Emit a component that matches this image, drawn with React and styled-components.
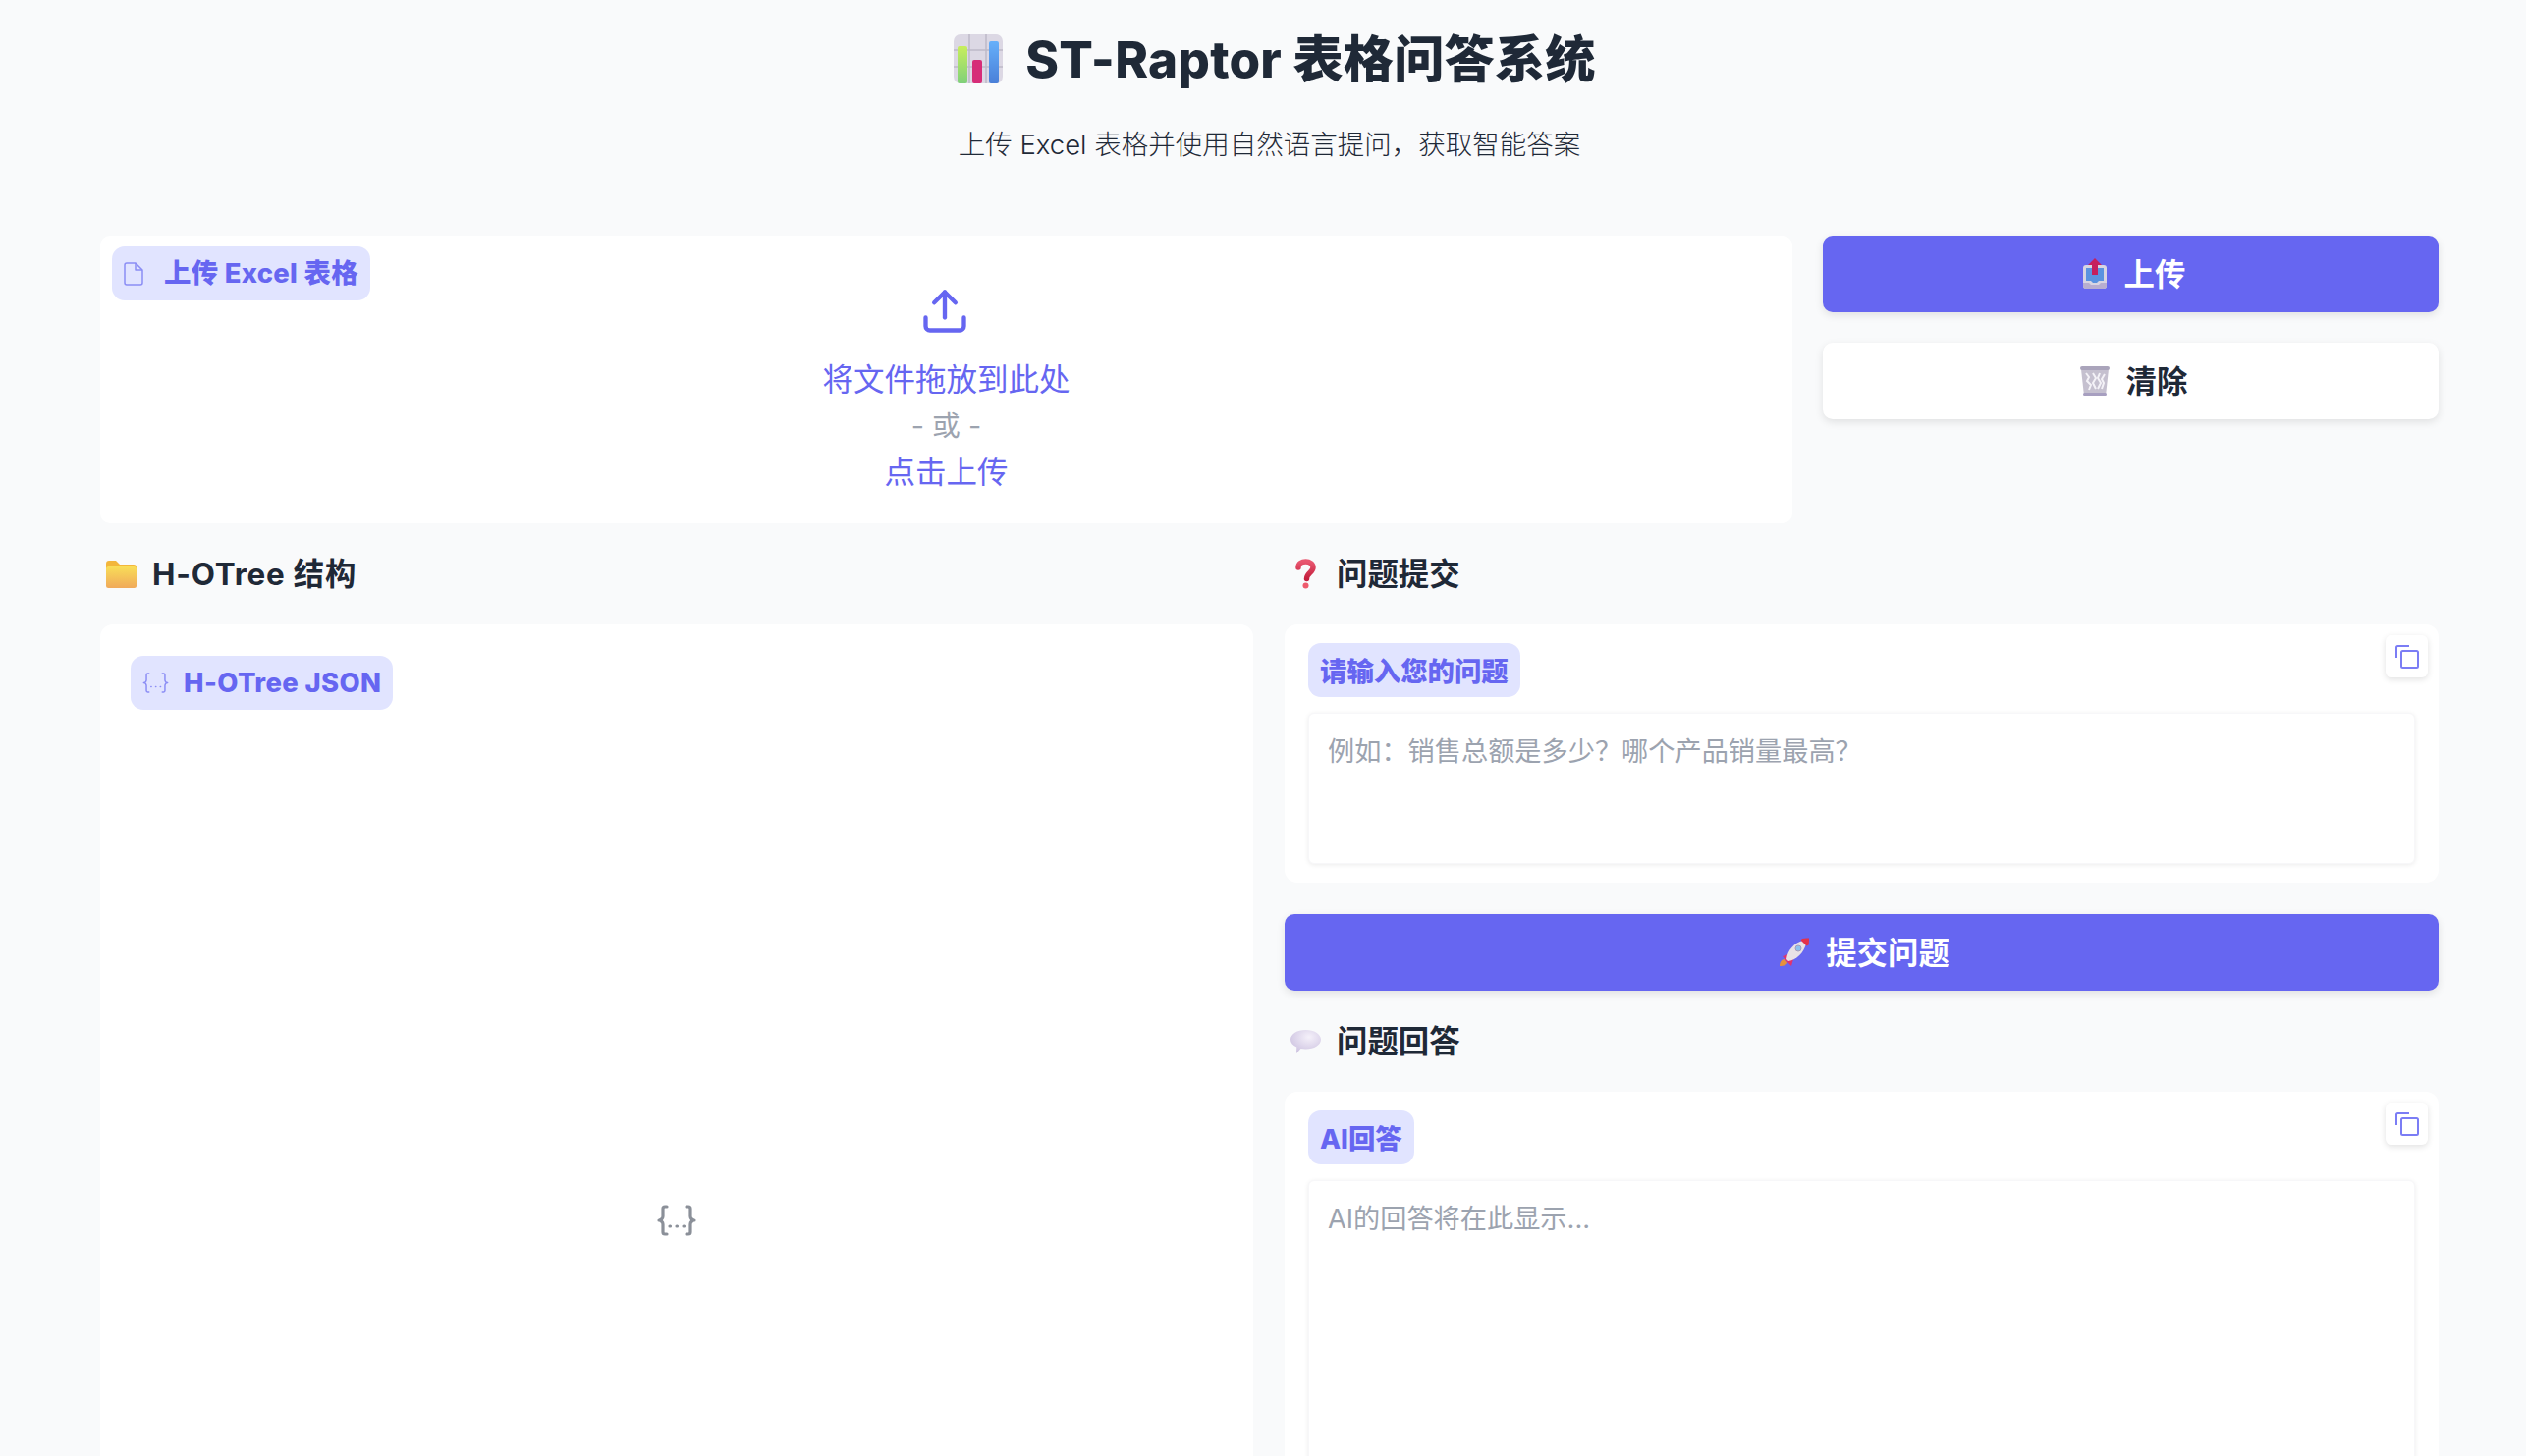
import React from 'react'
import styled, { createGlobalStyle } from 'styled-components'

const stack = `Inter, "Noto Sans CJK SC", sans-serif`
const primary = '#6666f1'

const Global = createGlobalStyle`
  html, body {
    margin: 0;
    padding: 0;
    height: 100%;
    overflow: hidden;
    background: #f9fafb;
  }
  * { box-sizing: border-box; }
  body { font-family: ${stack}; color: #1f2937; }
`

const Page = styled.div`
  height: 1483px;
  overflow: hidden;
  padding: 0 89px 0 102px;
`
const Header = styled.header`
  height: 240px;
  padding-top: 28px;
  text-align: center;
`
const Title = styled.h1`
  margin: 0;
  height: 64px;
  padding-left: 10px;
  display: flex;
  align-items: center;
  justify-content: center;
  gap: 22px;
  font-size: 51.2px;
  font-weight: 800;
  letter-spacing: 0.2px;
  line-height: 64px;
  color: #1f2937;
`
const Subtitle = styled.p`
  margin: 35px 0 0;
  font-size: 27.5px;
  line-height: 40px;
  font-weight: 300;
  color: #1f2937;
`
const TopRow = styled.section`
  display: grid;
  grid-template-columns: 1723px 1fr;
  gap: 31px;
`
const UploadPanel = styled.div`
  position: relative;
  height: 293px;
  background: #fff;
  border-radius: 10px;
  display: flex;
  flex-direction: column;
  align-items: center;
  padding-top: 51px;
  color: ${primary};
  font-size: 31.5px;
  line-height: 47px;
`
const UploadIcon = styled.svg`
  width: 52px;
  height: 52px;
  margin: 0 4px 20px 0;
  stroke: ${primary};
  stroke-width: 2;
  fill: none;
  stroke-linecap: round;
  stroke-linejoin: round;
`
const Or = styled.div`
  color: #9ca3af;
  font-size: 28.8px;
`
const Badge = styled.div`
  display: inline-flex;
  align-items: center;
  gap: ${p => p.$gap || 0}px;
  height: 55px;
  padding: 0 12px 1px;
  border-radius: 13px;
  background: #e1e4ff;
  color: ${primary};
  font-size: 27.4px;
  font-weight: 800;
  letter-spacing: ${p => p.$spacing || 0}px;
  white-space: nowrap;
  svg { margin-top: 1px; }
`
const FloatBadge = styled(Badge)`
  position: absolute;
  top: 11px;
  left: 12px;
`
const Actions = styled.div`
  display: flex;
  flex-direction: column;
  gap: 31px;
`
const Button = styled.button`
  display: flex;
  align-items: center;
  justify-content: center;
  gap: 16px;
  width: 100%;
  height: 78px;
  padding: 0 0 3px 5px;
  border: 0;
  border-radius: 10px;
  font-family: inherit;
  font-size: 31.4px;
  font-weight: 700;
  color: ${p => (p.$primary ? '#fff' : '#1f2937')};
  background: ${p => (p.$primary ? primary : '#fff')};
  box-shadow: 0 3px 8px rgba(0, 0, 0, 0.1);
  svg { margin-top: 3px; }
`
const Columns = styled.section`
  display: grid;
  grid-template-columns: 1174px 1fr;
  gap: 32px;
  margin-top: 18px;
`
const Column = styled.div`
  display: flex;
  flex-direction: column;
`
const SectionTitle = styled.h2`
  margin: 0;
  height: 66px;
  padding: 0 0 3px 5px;
  display: flex;
  align-items: center;
  gap: 16px;
  font-size: 31.4px;
  font-weight: 700;
  letter-spacing: ${p => p.$spacing || 0}px;
  color: #1f2937;
`
const IconBox = styled.span`
  width: 31px;
  height: 36px;
  margin: 4px 0 0 1px;
  display: flex;
  align-items: center;
  justify-content: center;
  flex: none;
`
const Card = styled.div`
  position: relative;
  background: #fff;
  border-radius: 13px;
  margin-top: 19px;
  padding: ${p => p.$pad || '19px 24px 18px'};
  display: flex;
  flex-direction: column;
  align-items: flex-start;
`
const TreeCard = styled(Card)`
  height: 1200px;
`
const TreeEmpty = styled.div`
  height: 1040px;
  width: 100%;
  display: flex;
  align-items: center;
  justify-content: center;
`
const Input = styled.textarea`
  display: block;
  width: 100%;
  height: ${p => p.$h}px;
  margin-top: 16px;
  padding: 19px 19px;
  border: 1px solid #f7f7f9;
  border-radius: 6px;
  background: #fff;
  box-shadow: 0 1px 5px rgba(0, 0, 0, 0.08);
  resize: none;
  outline: none;
  font-family: inherit;
  font-size: 27.2px;
  line-height: 40px;
  &::placeholder { color: #9ca3af; opacity: 1; }
`
const CopyButton = styled.div`
  position: absolute;
  top: 11px;
  right: 11px;
  width: 43px;
  height: 43px;
  border-radius: 6px;
  background: #fff;
  box-shadow: 0 2px 6px rgba(0, 0, 0, 0.12);
  display: flex;
  align-items: center;
  justify-content: center;
`
const SubmitWrap = styled.div`
  margin-top: 32px;
`
const AnswerTitle = styled(SectionTitle)`
  margin-top: 18px;
`

const ChartEmoji = () => (
  <svg width="52" height="50" viewBox="0 0 52 50">
    <defs>
      <linearGradient id="gGreen" x1="0" y1="0" x2="0" y2="1"><stop offset="0" stopColor="#c8ee5c" /><stop offset="1" stopColor="#7fd07a" /></linearGradient>
      <linearGradient id="gBlue" x1="0" y1="0" x2="0" y2="1"><stop offset="0" stopColor="#66b0fa" /><stop offset="1" stopColor="#4a7fd8" /></linearGradient>
    </defs>
    <rect x="1" y="0" width="50" height="50" rx="7" fill="#dcd8e4" />
    <path d="M17 0v50M34 0v50M1 16h50M1 33h50" stroke="#bdb9c8" strokeWidth="1.5" />
    <rect x="5" y="12" width="10" height="38" rx="2" fill="url(#gGreen)" />
    <rect x="20" y="26" width="10" height="24" rx="2" fill="#d62d78" />
    <rect x="37" y="7" width="10" height="43" rx="2" fill="url(#gBlue)" />
  </svg>
)
const TrayEmoji = () => (
  <svg width="28" height="32" viewBox="0 0 28 32">
    <rect x="2" y="7" width="24" height="24" rx="3" fill="#d9d5e2" />
    <path d="M2 25h6l2 2h8l2-2h6v3a3 3 0 0 1-3 3H5a3 3 0 0 1-3-3z" fill="#b8aed0" />
    <path d="M5 10h18v13h-5l-2 2h-4l-2-2H5z" fill="#5b93e0" />
    <path d="M14 0l7 7h-4v10h-6V7H7z" fill="#c51f5d" />
  </svg>
)
const BasketEmoji = () => (
  <svg width="32" height="32" viewBox="0 0 32 32">
    <path d="M2 4h28l-3 27H5z" fill="#c5c0cf" />
    <path d="M7 8l3 4-2 4 4 4-2 5M14 8l3 5-3 5 3 6M21 8l-2 5 3 5-3 6M26 9l-3 5 2 4-2 6" stroke="#f4f2f7" strokeWidth="2" fill="none" />
    <rect x="1" y="1" width="30" height="4" rx="2" fill="#aaa4bb" />
    <rect x="4" y="28" width="24" height="3" rx="1.5" fill="#a79fc0" />
  </svg>
)
const FolderEmoji = () => (
  <svg width="31" height="28" viewBox="0 0 31 28">
    <defs>
      <linearGradient id="gFolder" x1="0" y1="0" x2="0" y2="1"><stop offset="0" stopColor="#f9de58" /><stop offset="1" stopColor="#f0a95a" /></linearGradient>
    </defs>
    <path d="M0 3a3 3 0 0 1 3-3h7l4 4h14a3 3 0 0 1 3 3v6H0z" fill="#f3b63c" />
    <rect x="0" y="6" width="31" height="22" rx="2.5" fill="url(#gFolder)" />
  </svg>
)
const QuestionEmoji = () => (
  <svg width="21" height="31" viewBox="0 0 21 31">
    <defs>
      <linearGradient id="gQ" x1="0" y1="0" x2="0" y2="1"><stop offset="0" stopColor="#e8566f" /><stop offset="1" stopColor="#c41f3d" /></linearGradient>
    </defs>
    <path d="M3 9c0-4 3.500-6 7.500-6S18 5.500 18 9c0 5-6.500 5.500-6.500 11.500" fill="none" stroke="url(#gQ)" strokeWidth="5.500" strokeLinecap="round" />
    <circle cx="10.500" cy="27.500" r="3" fill="#ee5a6c" />
  </svg>
)
const BalloonEmoji = () => (
  <svg width="31" height="24" viewBox="0 0 31 24">
    <defs>
      <radialGradient id="gBalloon" cx="0.6" cy="0.3" r="0.8"><stop offset="0" stopColor="#f5f1fa" /><stop offset="1" stopColor="#c9bede" /></radialGradient>
    </defs>
    <path d="M15.500 0C24 0 31 4.200 31 9.800s-7 9.800-15.500 9.800c-1.800 0-3.500-.2-5-.5L6 24l.3-6.500C2.400 15.800 0 13 0 9.800 0 4.200 7 0 15.500 0z" fill="url(#gBalloon)" />
  </svg>
)
const RocketEmoji = () => (
  <svg width="32" height="30" viewBox="0 0 32 30">
    <path d="M1 29c0-4 2-7 5-7l3 3c0 3-4 4-8 4z" fill="#e8913a" />
    <path d="M4 19l6-2 5 5-2 7-4-4z" fill="#e0336f" />
    <path d="M10 24L8 22C9 13 16 5 25 3l3 3c-2 9-10 17-18 18z" fill="#e8e2e6" />
    <path d="M24 1c3-.500 6-.500 7-.500 0 1 0 4-.5 7l-2 1-6-6z" fill="#e3314a" />
    <circle cx="20" cy="11" r="3" fill="#8ec2ee" stroke="#a69cb8" strokeWidth="1" />
  </svg>
)
const FileIcon = () => (
  <svg width="21" height="24" viewBox="0 0 21 24" fill="none" stroke="#8b8df5" strokeWidth="1.500" strokeLinejoin="round">
    <path d="M3 1h9l7 7v13a2 2 0 0 1-2 2H3a2 2 0 0 1-2-2V3a2 2 0 0 1 2-2z" />
    <path d="M12 1v7h7" />
  </svg>
)
const BracesIcon = ({ size, color, weight }) => (
  <svg width={size} height={size} viewBox="0 0 40 30" fill="none" stroke={color} strokeWidth={weight} strokeLinecap="round" strokeLinejoin="round">
    <path d="M10 1H8a2 2 0 0 0-2 2v8c0 2-2 4-4 4 2 0 4 2 4 4v8a2 2 0 0 0 2 2h2" />
    <path d="M30 1h2a2 2 0 0 1 2 2v8c0 2 2 4 4 4-2 0-4 2-4 4v8a2 2 0 0 1-2 2h-2" />
    <path d="M13 21h.5M20 21h.5M27 21h.5" />
  </svg>
)
const CopyIcon = () => (
  <svg width="24" height="24" viewBox="0 0 24 24" fill="none" stroke="#7b7df5" strokeWidth="2">
    <rect x="6" y="6" width="17" height="17" rx="1.500" />
    <path d="M1 13V2.500A1.500 1.500 0 0 1 2.500 1H14" />
  </svg>
)

export default function App() {
  return (
    <Page>
      <Global />
      <Header>
        <Title><ChartEmoji />ST-Raptor 表格问答系统</Title>
        <Subtitle>上传 Excel 表格并使用自然语言提问，获取智能答案</Subtitle>
      </Header>

      <TopRow>
        <UploadPanel>
          <FloatBadge $gap={20} $spacing={0.3}><FileIcon />上传 Excel 表格</FloatBadge>
          <UploadIcon viewBox="0 0 24 24">
            <path d="M12 3v12" />
            <path d="m17 8-5-5-5 5" />
            <path d="M21 15v4a2 2 0 0 1-2 2H5a2 2 0 0 1-2-2v-4" />
          </UploadIcon>
          <div>将文件拖放到此处</div>
          <Or>- 或 -</Or>
          <div>点击上传</div>
        </UploadPanel>
        <Actions>
          <Button $primary><TrayEmoji />上传</Button>
          <Button><BasketEmoji />清除</Button>
        </Actions>
      </TopRow>

      <Columns>
        <Column>
          <SectionTitle $spacing={0.8}><IconBox><FolderEmoji /></IconBox>H-OTree 结构</SectionTitle>
          <TreeCard $pad="32px 31px">
            <Badge $gap={15} $spacing={0.4}><BracesIcon size={27} color="#8b8df5" weight={2.2} />H-OTree JSON</Badge>
            <TreeEmpty><BracesIcon size={40} color="#8b9099" weight={3.2} /></TreeEmpty>
          </TreeCard>
        </Column>

        <Column>
          <SectionTitle><IconBox><QuestionEmoji /></IconBox>问题提交</SectionTitle>
          <Card $pad="19px 24px 19px">
            <Badge>请输入您的问题</Badge>
            <Input $h={154} placeholder="例如：销售总额是多少？哪个产品销量最高？" />
            <CopyButton><CopyIcon /></CopyButton>
          </Card>
          <SubmitWrap>
            <Button $primary><RocketEmoji />提交问题</Button>
          </SubmitWrap>
          <AnswerTitle><IconBox><BalloonEmoji /></IconBox>问题回答</AnswerTitle>
          <Card>
            <Badge>AI回答</Badge>
            <Input $h={400} placeholder="AI的回答将在此显示..." />
            <CopyButton><CopyIcon /></CopyButton>
          </Card>
        </Column>
      </Columns>
    </Page>
  )
}
